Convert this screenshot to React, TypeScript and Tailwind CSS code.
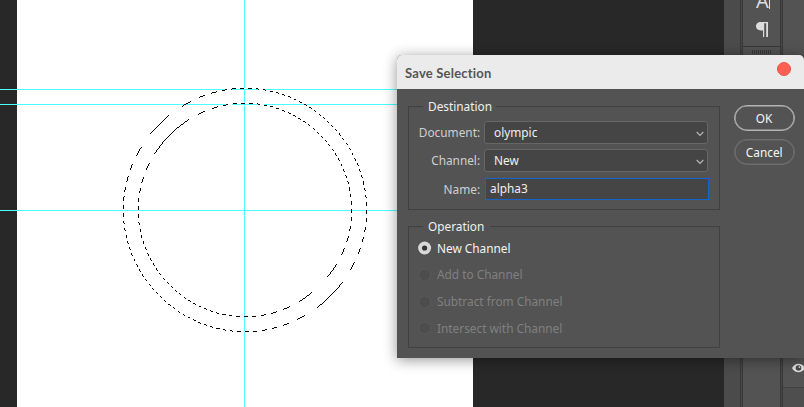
import React from "react";

const FONT = "font-['Noto_Sans',sans-serif]";

// Outline pixels of a circular selection, with the diagonal dash phase of marching ants.
// The edge bulges slightly at the four axis points, where the anti-aliased rim is flattest.
function antPaths(diagonal: number, axis: number) {
  const cx = 245;
  const cy = 210;
  const inside = (x: number, y: number) => {
    const dx = x + 0.5 - cx;
    const dy = y + 0.5 - cy;
    const d2 = dx * dx + dy * dy;
    const c = (dx * dx - dy * dy) / d2;
    const r = diagonal + (axis - diagonal) * c * c;
    return d2 < r * r;
  };
  let dark = "";
  let light = "";
  for (let y = cy - 123; y < cy + 123; y++) {
    for (let x = cx - 123; x < cx + 123; x++) {
      if (!inside(x, y)) continue;
      if (inside(x - 1, y) && inside(x + 1, y) && inside(x, y - 1) && inside(x, y + 1)) continue;
      const cell = `M${x} ${y}h1v1h-1z`;
      if ((x + y) % 8 < 4) dark += cell;
      else light += cell;
    }
  }
  return { dark, light };
}

const selections = [antPaths(121.6, 122.2), antPaths(106.6, 107.3)];

function Canvas() {
  return (
    <svg className="absolute inset-0" width="804" height="407" shapeRendering="crispEdges">
      <g fill="#4affff">
        <rect x="0" y="89" width="473" height="1" />
        <rect x="0" y="104" width="473" height="1" />
        <rect x="0" y="210" width="473" height="1" />
        <rect x="244" y="0" width="1" height="407" />
      </g>
      {selections.map((s, i) => (
        <g key={i}>
          <path d={s.light} fill="#fff" />
          <path d={s.dark} fill="#000" />
        </g>
      ))}
    </svg>
  );
}

function Legend({ children, width }: { children: string; width: string }) {
  return (
    <div className="absolute -top-[10px] left-[14px] bg-[#535353] pl-[5px]">
      <div className={`${width} h-[19px] origin-left scale-x-[0.91] whitespace-nowrap text-[13px] leading-[19px] text-[#f0f0f0]`}>{children}</div>
    </div>
  );
}

function Select({ value }: { value: string }) {
  return (
    <div className="flex h-[23px] w-[224px] items-center justify-between rounded-[3px] border border-[#666] bg-[#454545] pl-[9px] pr-[3px] text-[13px] text-[#f0f0f0]">
      <span className="origin-left scale-x-[0.91]">{value}</span>
      <svg className="mt-[2px]" width="8" height="6" viewBox="0 0 8 6" fill="none" stroke="#b5b5b5" strokeWidth="1.2">
        <path d="M.7 1 4 4.3 7.3 1" />
      </svg>
    </div>
  );
}

function Row({ label, children }: { label: string; children: React.ReactNode }) {
  return (
    <div className="flex items-center">
      <span className="w-[72px] origin-right scale-x-[0.91] pr-[1px] text-right text-[13px] leading-none text-[#cfcfcf]">{label}</span>
      <div className="ml-[3px]">{children}</div>
    </div>
  );
}

function Radio({ label, checked }: { label: string; checked?: boolean }) {
  return (
    <div className="flex h-[20px] items-center gap-[5px]">
      <svg width="14" height="14" viewBox="0 0 14 14">
        {checked ? (
          <>
            <circle cx="6.6" cy="7" r="6.5" fill="#d8d8d8" />
            <circle cx="6.6" cy="7" r="2.6" fill="#333" />
          </>
        ) : (
          <circle cx="6.6" cy="7" r="6" fill="#4d4d4d" stroke="#5a5a5a" />
        )}
      </svg>
      <span className={`origin-left scale-x-[0.91] whitespace-nowrap text-[13px] leading-none ${checked ? "text-[#f4f4f4]" : "text-[#808080]"}`}>{label}</span>
    </div>
  );
}

function Divider() {
  return <div className="w-[3px] shrink-0 border-x border-[#393939] bg-[#464646]" />;
}

function Dialog() {
  return (
    <div className={`absolute left-[397px] top-[55px] h-[303px] w-[407px] rounded-t-[5px] bg-[#535353] shadow-[0_2px_14px_rgba(0,0,0,0.42)] ${FONT}`}>
      <div className="flex h-[34px] items-start justify-between rounded-t-[5px] bg-[#ebebeb] pl-[8px] pr-[13px]">
        <span className="mt-[9px] font-['Lato',sans-serif] text-[13px] font-bold leading-[18px] tracking-[0.2px] text-[#555]">Save Selection</span>
        <span className="mt-[7px] h-[14px] w-[14px] rounded-full border border-[#e85549] bg-[#ff5f52]" />
      </div>
      <div className="flex pl-[11px]">
        <div className="w-[312px] shrink-0">
          <div className="relative mt-[17px] h-[104px] border border-[#404040]">
            <Legend width="w-[68px]">Destination</Legend>
            <div className="flex flex-col pt-[14px]">
              <Row label="Document:"><Select value="olympic" /></Row>
              <div className="h-[5px]" />
              <Row label="Channel:"><Select value="New" /></Row>
              <div className="h-[6px]" />
              <Row label="Name:">
                <div className="ml-px flex h-[22px] w-[224px] items-center border border-[#1464cc] bg-[#454545] pl-[4px] text-[13px] text-[#f0f0f0]">
                  <span className="origin-left scale-x-[0.91]">alpha3</span>
                </div>
              </Row>
            </div>
          </div>
          <div className="relative mt-[16px] h-[122px] border border-[#404040]">
            <Legend width="w-[62px]">Operation</Legend>
            <div className="flex flex-col gap-[6.8px] pl-[9px] pt-[11px]">
              <Radio label="New Channel" checked />
              <Radio label="Add to Channel" />
              <Radio label="Subtract from Channel" />
              <Radio label="Intersect with Channel" />
            </div>
          </div>
        </div>
        <div className="ml-[14px] flex flex-col gap-[8px] pt-[16px]">
          <button className="h-[26px] w-[61px] rounded-full border border-[#b4b4b4] text-[13px] leading-none text-[#f5f5f5] shadow-[inset_0_0_0_0.6px_#b4b4b4]">
            <span className="inline-block scale-x-[0.91]">OK</span>
          </button>
          <button className="h-[26px] w-[61px] rounded-full border border-[#6e6e6e] text-[13px] leading-none text-[#f5f5f5] shadow-[inset_0_0_0_0.6px_#6e6e6e]">
            <span className="inline-block scale-x-[0.91]">Cancel</span>
          </button>
        </div>
      </div>
    </div>
  );
}

export default function App() {
  return (
    <div className={`relative flex h-[407px] w-[804px] overflow-hidden bg-[#282828] ${FONT}`}>
      <div className="w-[17px] shrink-0" />
      <div className="w-[456px] shrink-0 bg-white" />
      <div className="w-[251px] shrink-0" />
      <div className="w-[16px] shrink-0 bg-[#4b4b4b]" />
      <Divider />
      <div className="flex w-[37px] shrink-0 flex-col items-center bg-[#535353]">
        <div className="mt-[-12px] flex h-[26px] w-full items-start pl-[13px] text-[20px] leading-[26px] text-[#dcdcdc]">
          <span>A</span>
          <span className="mt-[6px] h-[15px] w-px bg-[#dcdcdc]" />
        </div>
        <svg className="mt-[8px]" width="12" height="15" viewBox="0 0 12 15" fill="#dcdcdc">
          <path d="M12 0H5C1.5 0 0 2 0 4.3S1.8 8.5 5 8.5H7V15H8.2V1.2H10.2V15H12Z" />
        </svg>
        <div className="mt-[9px] h-px w-full bg-[#393939]" />
        <div className="mt-[3px] flex gap-px">
          {Array.from({ length: 10 }, (_, i) => (
            <span key={i} className="h-[4px] w-px bg-[#393939]" />
          ))}
        </div>
      </div>
      <Divider />
      <div className="flex flex-1 flex-col bg-[#535353]">
        <svg className="ml-[9px] mt-[363px]" width="13" height="10" viewBox="0 0 13 10">
          <path d="M0 5C3-.8 10-.8 13 5 10 10.8 3 10.8 0 5Z" fill="#dedede" />
          <circle cx="6.5" cy="5" r="2.8" fill="#484848" />
          <circle cx="7.4" cy="4.1" r=".9" fill="#dedede" />
        </svg>
        <div className="mt-[14px] flex-1 border-t border-[#414141] bg-[#4e4e4e]" />
      </div>
      <Canvas />
      <Dialog />
    </div>
  );
}
